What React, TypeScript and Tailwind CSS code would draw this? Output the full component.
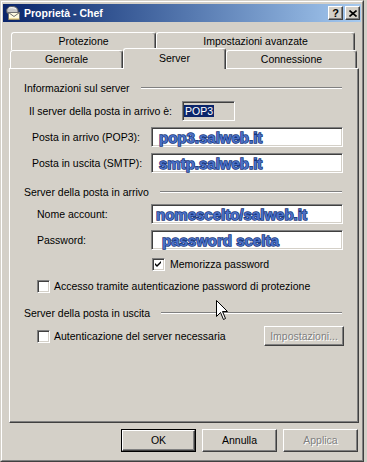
import React from "react";

const font = "font-['Liberation_Sans',Arial,sans-serif]";

const raised =
  "border border-t-white border-l-white border-b-[#404040] border-r-[#404040] shadow-[inset_-1px_-1px_0_#808080]";
const sunken =
  "border border-t-[#808080] border-l-[#808080] border-b-white border-r-white shadow-[inset_1px_1px_0_#404040,inset_-1px_-1px_0_#d4d0c8]";

const MailIcon = () => (
  <svg width="16" height="16" viewBox="0 0 16 16">
    <path d="M2 7 C1 4 3 1.5 7 1.5 C11 1.5 13 3.5 13 6 L13 8 L2 8 Z" fill="#c8c8c8" stroke="#606060" strokeWidth="1" />
    <path d="M4 3 C6 2.5 9 2.5 11 4" stroke="#ffffff" strokeWidth="1" fill="none" />
    <rect x="3.5" y="7.5" width="11" height="7" fill="#fffbe0" stroke="#707070" />
    <path d="M3.5 7.5 L9 11.5 L14.5 7.5" stroke="#707070" fill="none" />
    <path d="M4 14 L14 14" stroke="#e0c060" />
  </svg>
);

const CaptionBtn = ({ children }: { children: React.ReactNode }) => (
  <div className={`w-[15px] h-[14px] bg-[#d4d0c8] flex items-center justify-center ${raised}`}>
    {children}
  </div>
);

const Tab = ({ label, w, selected }: { label: string; w: string; selected?: boolean }) => (
  <div
    className={`${w} ${
      selected ? "relative z-10 h-[21px] -mb-px pb-[2px]" : "h-full"
    } bg-[#d4d0c8] border-t border-l border-r border-t-white border-l-white border-r-[#404040] rounded-t-[3px] shadow-[inset_-1px_0_0_#808080] flex items-center justify-center`}
  >
    {label}
  </div>
);

const Group = ({ label, className }: { label: string; className: string }) => (
  <div className={`flex items-center h-[14px] ${className}`}>
    <span>{label}</span>
    <div className="flex-1 ml-[11px] mr-[2px] h-[2px] border-t border-t-[#808080] border-b border-b-white" />
  </div>
);

const blueText =
  "font-bold text-[15px] text-[#4a70c6] [-webkit-text-stroke:1.4px_#163477] [paint-order:stroke_fill]";

const InputRow = ({
  label,
  value,
  indent,
  labelW,
  textPad,
  className,
}: {
  label: string;
  value: string;
  indent: string;
  labelW: string;
  textPad: string;
  className: string;
}) => (
  <div className={`flex items-center h-[20px] ${indent} ${className}`}>
    <span className={`${labelW} flex-none`}>{label}</span>
    <div className={`w-[192px] h-[20px] bg-white flex items-center ${textPad} ${sunken}`}>
      <span className={blueText}>{value}</span>
    </div>
  </div>
);

const Check = ({ checked }: { checked?: boolean }) => (
  <div className={`w-[13px] h-[13px] flex-none bg-white flex items-center justify-center ${sunken}`}>
    {checked && (
      <svg width="7" height="7" viewBox="0 0 7 7">
        <path d="M0 2 L2 4 L6 0 L6 2 L2 6 L0 4 Z" fill="#000" />
      </svg>
    )}
  </div>
);

const disabledText = "text-[#808080] [text-shadow:1px_1px_0_#ffffff]";

const App = () => {
  return (
    <div className={`relative w-[367px] h-[462px] bg-[#d4d0c8] ${font} text-[10.5px] text-black leading-none`}>
      <div className="w-[364px] h-[462px] border border-t-[#d4d0c8] border-l-[#d4d0c8] border-b-[#404040] border-r-[#404040]">
        <div className="h-full border border-t-white border-l-white border-b-[#808080] border-r-[#808080] px-px pt-[2px] flex flex-col">
          {/* caption */}
          <div className="h-[18px] flex-none flex items-center bg-gradient-to-r from-[#0a246a] to-[#a6caf0] pl-[2px] pr-px">
            <MailIcon />
            <span className="ml-[3px] text-white font-bold">Proprietà - Chef</span>
            <div className="ml-auto flex gap-[2px]">
              <CaptionBtn>
                <span className="font-bold text-[11px] leading-none">?</span>
              </CaptionBtn>
              <CaptionBtn>
                <svg width="8" height="7" viewBox="0 0 8 7">
                  <path d="M0.5 0.5 L7.5 6.5 M7.5 0.5 L0.5 6.5" stroke="#000" strokeWidth="1.6" />
                </svg>
              </CaptionBtn>
            </div>
          </div>

          {/* tabs */}
          <div className="mt-[10px] flex h-[18px] ml-[8px]">
            <Tab label="Protezione" w="w-[145px]" />
            <Tab label="Impostazioni avanzate" w="w-[199px]" />
          </div>
          <div className="flex items-end h-[18px] ml-[7px]">
            <Tab label="Generale" w="w-[113px]" />
            <Tab label="Server" w="w-[103px]" selected />
            <Tab label="Connessione" w="w-[131px]" />
          </div>

          {/* panel */}
          <div className="ml-[6px] w-[350px] h-[355px] flex-none border border-t-white border-l-white border-b-[#404040] border-r-[#404040] shadow-[inset_-1px_-1px_0_#808080] pt-[12px] pl-[14px] pr-[14px] flex flex-col">
            <Group label="Informazioni sul server" className="" />

            <div className="mt-[6px] flex items-center h-[20px] pl-[5px]">
              <span className="w-[153px] flex-none">Il server della posta in arrivo è:</span>
              <div className={`w-[53px] h-[20px] flex items-center pl-[1px] ${sunken}`}>
                <span className="h-[12px] px-[1px] flex items-center bg-[#0a246a] text-white">POP3</span>
              </div>
            </div>

            <InputRow
              label="Posta in arrivo (POP3):"
              value="pop3.salweb.it"
              indent="pl-[8px]"
              labelW="w-[119px]"
              textPad="pl-[7px]"
              className="mt-[6px]"
            />
            <InputRow
              label="Posta in uscita (SMTP):"
              value="smtp.salweb.it"
              indent="pl-[8px]"
              labelW="w-[119px]"
              textPad="pl-[7px]"
              className="mt-[6px]"
            />

            <Group label="Server della posta in arrivo" className="mt-[12px]" />

            <InputRow
              label="Nome account:"
              value="nomescelto/salweb.it"
              indent="pl-[13px]"
              labelW="w-[114px]"
              textPad="pl-[4px]"
              className="mt-[5px]"
            />
            <InputRow
              label="Password:"
              value="password scelta"
              indent="pl-[13px]"
              labelW="w-[114px]"
              textPad="pl-[10px]"
              className="mt-[6px]"
            />

            <div className="mt-[8px] flex items-center h-[13px] pl-[128px]">
              <Check checked />
              <span className="ml-[5px]">Memorizza password</span>
            </div>

            <div className="mt-[9px] flex items-center h-[13px] pl-[13px]">
              <Check />
              <span className="ml-[4px]">Accesso tramite autenticazione password di protezione</span>
            </div>

            <Group label="Server della posta in uscita" className="mt-[13px]" />

            <div className="mt-[6px] flex items-center h-[20px] pl-[13px]">
              <Check />
              <span className="ml-[4px]">Autenticazione del server necessaria</span>
              <div className={`ml-auto w-[80px] h-[20px] flex items-center justify-center ${raised}`}>
                <span className={disabledText}>Impostazioni...</span>
              </div>
            </div>
          </div>

          {/* buttons */}
          <div className="mt-[6px] flex justify-end gap-[6px] pr-[3px]">
            <div className="w-[75px] h-[23px] border border-black">
              <div className={`w-full h-full flex items-center justify-center ${raised}`}>OK</div>
            </div>
            <div className={`w-[75px] h-[23px] flex items-center justify-center ${raised}`}>Annulla</div>
            <div className={`w-[75px] h-[23px] flex items-center justify-center ${raised}`}>
              <span className={disabledText}>Applica</span>
            </div>
          </div>
        </div>
      </div>

      {/* mouse pointer */}
      <svg className="absolute left-[216px] top-[300px]" width="13" height="21" viewBox="0 0 13 21">
        <path
          d="M0.5 0.5 L0.5 16.5 L4.5 12.5 L7.5 19.5 L9.5 18.5 L6.5 11.5 L11.5 11.5 Z"
          fill="#fff"
          stroke="#000"
          strokeWidth="1"
        />
      </svg>
    </div>
  );
};

export default App;
